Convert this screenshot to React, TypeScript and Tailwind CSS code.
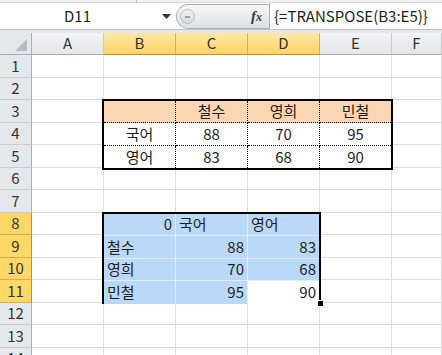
const FONT = { fontFamily: '"Noto Sans CJK KR", "Noto Sans", sans-serif' }

const COLS = ['A', 'B', 'C', 'D', 'E', 'F']
const HL_COLS = ['B', 'C', 'D']
const HL_ROWS = [8, 9, 10, 11]
const ROWS = Array.from({ length: 14 }, (_, i) => i + 1)

// cells that are drawn by a range block instead of the plain grid
function covered(row: number, col: number) {
  if (row >= 3 && row <= 5 && col >= 1 && col <= 4) return true
  if (row >= 8 && row <= 11 && col >= 1 && col <= 3) return true
  return false
}

function FormulaBar() {
  return (
    <div className="h-[33px] bg-[#e9ecef] flex flex-col">
      <div className="h-[3px] bg-[#eef0f2] border-b border-[#d7dadd] relative">
        <div className="absolute left-[136px] top-0 w-px h-[3px] bg-[#b9bdc2]" />
      </div>
      <div className="flex h-[27px] bg-white border-b border-[#bfc3c8]">
        <div className="w-[176px] flex items-center">
          <div className="w-[155px] text-center text-[15px] text-[#1e1e1e]">D11</div>
          <svg width="9" height="5" viewBox="0 0 9 5" className="ml-[7px] mt-[1px]">
            <path d="M0 0h9L4.5 5z" fill="#333" />
          </svg>
        </div>
        <div className="w-[93px] h-[25px] mt-[1px] rounded-l-[13px] border border-r-0 border-[#a9aeb4] bg-gradient-to-b from-[#f6f7f8] to-[#dde1e6] flex items-center">
          <div className="ml-[3px] w-[15px] h-[15px] rounded-full border border-[#b7bcc2] bg-gradient-to-b from-[#f2f3f5] to-[#d3d7dc] flex items-center justify-center">
            <div className="w-[5px] h-[2px] bg-[#9aa0a7]" />
          </div>
          <span className="ml-auto mr-[7px] text-[15px] italic font-bold text-[#3b3b3b]" style={{ fontFamily: '"Liberation Serif", serif' }}>
            f<span className="text-[12px]">x</span>
          </span>
        </div>
        <div className="flex-1 border-l border-[#a9aeb4] flex items-center pl-[4px] text-[15px] text-[#1e1e1e]">
          {'{=TRANSPOSE(B3:E5)}'}
        </div>
      </div>
      <div className="flex-1 bg-[#e4e7eb]" />
    </div>
  )
}

function ColHeader({ label }: { label: string }) {
  const hl = HL_COLS.includes(label)
  return (
    <div
      className={
        hl
          ? 'flex items-center justify-center border-r border-b border-r-[#e1a94c] border-b-[#c98a2b] bg-gradient-to-b from-[#fee7a3] to-[#fdd564] text-[15px] text-[#333]'
          : 'flex items-center justify-center border-r border-b border-r-[#c8ccd1] border-b-[#a7adb5] bg-gradient-to-b from-[#f3f5f7] to-[#e2e5e9] text-[15px] text-[#333]'
      }
    >
      {label}
    </div>
  )
}

function RowHeader({ n }: { n: number }) {
  const hl = HL_ROWS.includes(n)
  return (
    <div
      className={
        hl
          ? 'flex items-center justify-center border-r border-b border-r-[#c98a2b] border-b-[#e1a94c] bg-[#fdd867] text-[15px] text-[#333]'
          : 'flex items-center justify-center border-r border-b border-r-[#a7adb5] border-b-[#c8ccd1] bg-[#e4e7eb] text-[15px] text-[#333]'
      }
    >
      {n}
    </div>
  )
}

const SCORE_HEAD = ['', '철수', '영희', '민철']
const SCORES = [
  ['국어', '88', '70', '95'],
  ['영어', '83', '68', '90'],
]

function ScoreTable() {
  return (
    <div className="col-start-3 col-span-4 row-start-4 row-span-3 -ml-[2px] -mt-px -mr-px -mb-[2px] border-2 border-black bg-white relative z-10 grid grid-cols-[72px_72px_72px_1fr] grid-rows-[22px_22.5px_1fr] text-[15px] text-[#1e1e1e]">
      {SCORE_HEAD.map((h, i) => (
        <div
          key={'h' + i}
          className={`flex items-center justify-center bg-[#fcd5b4] border-b border-dotted border-black ${i < 3 ? 'border-r' : ''}`}
        >
          {h}
        </div>
      ))}
      {SCORES.map((row, r) =>
        row.map((v, i) => (
          <div
            key={r + '-' + i}
            className={`flex items-center justify-center border-dotted border-black ${i < 3 ? 'border-r' : ''} ${r === 0 ? 'border-b' : ''}`}
          >
            {v}
          </div>
        ))
      )}
    </div>
  )
}

const TRANSPOSED = [
  [{ v: '0', r: true }, { v: '국어' }, { v: '영어' }],
  [{ v: '철수' }, { v: '88', r: true }, { v: '83', r: true }],
  [{ v: '영희' }, { v: '70', r: true }, { v: '68', r: true }],
  [{ v: '민철' }, { v: '95', r: true }, { v: '90', r: true }],
]

function TransposedTable() {
  return (
    <div className="col-start-3 col-span-3 row-start-9 row-span-4 -ml-[2px] -mt-px -mr-px -mb-px border-2 border-black relative z-10 grid grid-cols-[72px_72px_1fr] grid-rows-[22.5px_22.5px_22.5px_1fr] text-[15px] text-[#1e1e1e]">
      {TRANSPOSED.map((row, r) =>
        row.map((c, i) => {
          const active = r === 3 && i === 2
          return (
            <div
              key={r + '-' + i}
              className={`flex items-center px-[3px] border-[#e2ecf8] ${active ? 'bg-white' : 'bg-[#bad8f8]'} ${c.r ? 'justify-end' : 'justify-start'} ${i < 2 ? 'border-r' : ''} ${r < 3 ? 'border-b' : ''}`}
            >
              {c.v}
            </div>
          )
        })
      )}
      <div className="absolute -right-[5px] -bottom-[5px] w-[7px] h-[7px] bg-black border border-white" />
    </div>
  )
}

export default function App() {
  return (
    <div className="w-[442px] h-[355px] overflow-hidden bg-white" style={FONT}>
      <FormulaBar />
      <div className="grid grid-cols-[32px_72px_72px_72px_72px_72px_1fr] grid-rows-[22px] auto-rows-[22.5px]">
        <div className="border-r border-b border-r-[#a7adb5] border-b-[#a7adb5] bg-[#e4e7eb] flex items-end justify-end pr-[4px] pb-[3px]">
          <svg width="12" height="12" viewBox="0 0 12 12">
            <path d="M12 0V12H0z" fill="#b7bcc3" />
          </svg>
        </div>
        {COLS.map((c) => (
          <ColHeader key={c} label={c} />
        ))}
        <ScoreTable />
        <TransposedTable />
        {ROWS.map((r) => [
          <RowHeader key={'rh' + r} n={r} />,
          ...COLS.map((c, i) =>
            covered(r, i) ? null : (
              <div key={r + c} className="border-r border-b border-[#dadcdf] bg-white" />
            )
          ),
        ])}
      </div>
    </div>
  )
}
